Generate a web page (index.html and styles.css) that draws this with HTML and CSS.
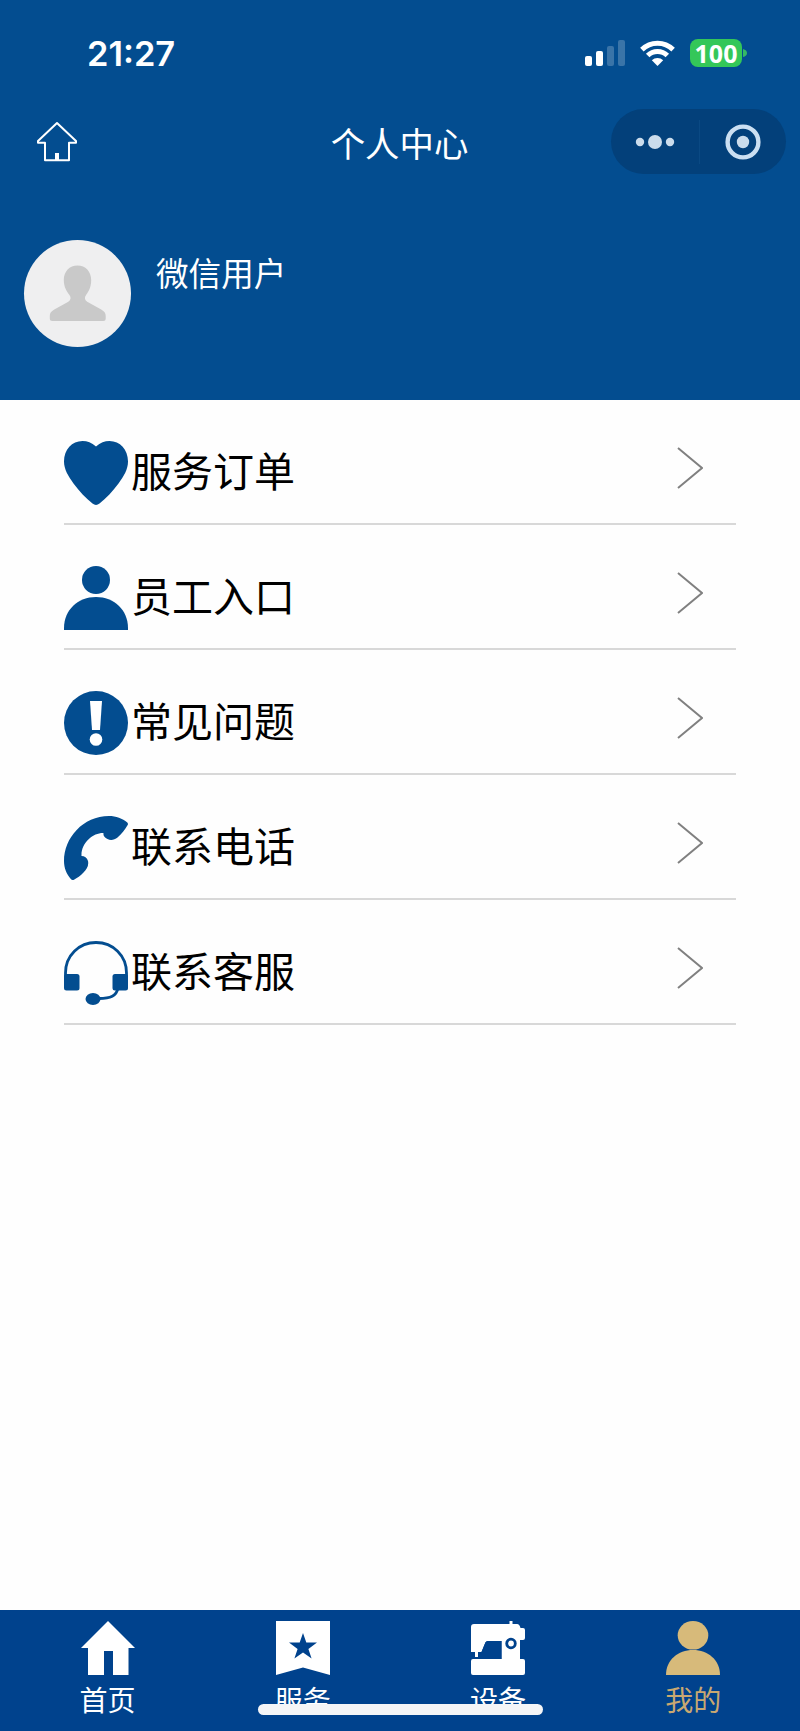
FILE: index.html
```html
<!DOCTYPE html>
<html lang="zh-CN">
<head>
  <meta charset="UTF-8">
  <title>个人中心</title>
  <meta name="viewport" content="width=device-width, initial-scale=1.0">
  <link rel="stylesheet" href="styles.css">
</head>
<body>
  <div class="page">
    <header class="header">
      <!-- 状态栏 -->
      <div class="status-bar">
        <span class="time">21:27</span>
        <div class="status-icons">
          <svg class="signal" width="40" height="26" viewBox="0 0 40 26" fill="#fff">
            <rect x="0" y="16" width="7" height="10" rx="2"/>
            <rect x="11" y="11" width="7" height="15" rx="2"/>
            <rect x="22" y="6" width="7" height="20" rx="2" opacity=".22"/>
            <rect x="33" y="0" width="7" height="26" rx="2" opacity=".22"/>
          </svg>
          <svg class="wifi" width="35" height="26" viewBox="0 0 35 26" fill="none" stroke="#fff" stroke-width="5">
            <path d="M1.900 9.600a22.200 22.200 0 0 1 31.200 0"/>
            <path d="M7.700 15.500a14 14 0 0 1 19.600 0"/>
            <path d="M11.800 20.200a8.400 8.400 0 0 1 11.400 0L17.500 26z" fill="#fff" stroke="none"/>
          </svg>
          <div class="battery"><span class="battery-level">100</span></div>
          <svg class="battery-cap" width="4" height="8" viewBox="0 0 4 8"><path d="M0 0q4 1 4 4t-4 4z" fill="#35b866"/></svg>
        </div>
      </div>

      <!-- 导航栏 -->
      <div class="nav-bar">
        <a class="nav-home">
          <svg width="42" height="42" viewBox="0 0 42 42" fill="none" stroke="#fff" stroke-width="2" stroke-linejoin="round">
            <path d="M21 2L2 20v1.800h7V39.300h24V21.800h7V20z"/>
            <path d="M21 32v7" stroke-width="4"/>
          </svg>
        </a>
        <h1 class="nav-title">个人中心</h1>
        <div class="capsule">
          <svg class="capsule-more" width="40" height="16" viewBox="0 0 40 16" fill="#cbdcec">
            <circle cx="5" cy="8" r="4.200"/>
            <circle cx="20" cy="8" r="7"/>
            <circle cx="35" cy="8" r="4.200"/>
          </svg>
          <span class="capsule-line"></span>
          <svg class="capsule-close" width="36" height="36" viewBox="0 0 36 36">
            <circle cx="18" cy="18" r="15.400" fill="none" stroke="#cbdff2" stroke-width="4.400"/>
            <circle cx="18" cy="18" r="6.200" fill="#cbdcec"/>
          </svg>
        </div>
      </div>

      <!-- 用户信息 -->
      <div class="user">
        <div class="avatar">
          <svg width="107" height="107" viewBox="0 0 107 107" fill="#c9c9c9">
            <path d="M53.500 25.500c8 0 13.700 6 13.700 14.500 0 7-2.500 11.500-5 14.800-2 2.600-1.700 5.200 1 6.900l14 7.800c3.200 1.900 4.500 3.600 4.500 6.500v2.500q0 2.500-2.500 2.500H28.300q-2.500 0-2.500-2.500V76c0-2.900 1.300-4.600 4.500-6.500l14-7.800c2.700-1.700 3-4.300 1-6.900-2.500-3.300-5.500-7.800-5.500-14.800 0-8.500 5.700-14.500 13.700-14.500z"/>
          </svg>
        </div>
        <span class="user-name">微信用户</span>
      </div>
    </header>

    <!-- 菜单列表 -->
    <main class="menu">
      <a class="menu-item">
        <svg class="menu-icon" viewBox="0 0 64 64" fill="#034d90">
          <path d="M32 5.500C27.500 1.800 23.500 0 18.500 0 8 0 0 8.500 0 20.500c0 8 4.500 15 9.500 22C15 50 22 57.500 28.500 62.600q3.500 2.800 7 0C42 57.500 49 50 54.500 42.500c5-7 9.500-14 9.500-22C64 8.500 56 0 45.500 0 40.500 0 36.500 1.800 32 5.500z"/>
        </svg>
        <span class="menu-text">服务订单</span>
        <svg class="arrow" viewBox="0 0 26 42"><path d="M1 1l24 20L1 41"/></svg>
      </a>
      <a class="menu-item">
        <svg class="menu-icon" viewBox="0 0 64 64" fill="#034d90">
          <circle cx="32" cy="14" r="14"/>
          <path d="M0 64v-2C0 44 14 31 32 31s32 13 32 31v2z"/>
        </svg>
        <span class="menu-text">员工入口</span>
        <svg class="arrow" viewBox="0 0 26 42"><path d="M1 1l24 20L1 41"/></svg>
      </a>
      <a class="menu-item">
        <svg class="menu-icon" viewBox="0 0 64 64" fill="#034d90">
          <circle cx="32" cy="32" r="32"/>
          <path d="M26 10h12l-2 29h-8z" fill="#fff"/>
          <circle cx="32" cy="48.500" r="6.300" fill="#fff"/>
        </svg>
        <span class="menu-text">常见问题</span>
        <svg class="arrow" viewBox="0 0 26 42"><path d="M1 1l24 20L1 41"/></svg>
      </a>
      <a class="menu-item">
        <svg class="menu-icon" viewBox="0 0 64 64" fill="#034d90">
          <path d="M63.300 6.500q1.200 1.200.2 2.700C61 13.500 57.500 18 53.500 21.500c-3 2.500-7 3.200-10 1.500-3-1.500-4.500-3.500-4-6C30 16.500 17 26 17.500 40c3 0 5.500 1.500 6.500 5 1 5-1.500 8-4.500 11.500-2.800 3.300-6.500 5.500-9.500 7.200q-2 .8-3.200-.7C2.500 58 0 52 0 45 0 22 19 0 45 0c7 0 13.500 2.500 18.300 6.500z"/>
        </svg>
        <span class="menu-text">联系电话</span>
        <svg class="arrow" viewBox="0 0 26 42"><path d="M1 1l24 20L1 41"/></svg>
      </a>
      <a class="menu-item">
        <svg class="menu-icon" viewBox="0 0 64 64" fill="#034d90">
          <path d="M1.500 36v-4C1.500 14.500 15 1.500 32 1.500S62.500 14.500 62.500 32v4M54 47c-1.500 8-7.500 10.500-19 10.500" fill="none" stroke="#034d90" stroke-width="2.800"/>
          <rect x="0" y="33" width="15.500" height="16.500" rx="2.500"/>
          <rect x="48.500" y="33" width="15.500" height="16.500" rx="2.500"/>
          <ellipse cx="29" cy="58" rx="7.500" ry="6"/>
        </svg>
        <span class="menu-text">联系客服</span>
        <svg class="arrow" viewBox="0 0 26 42"><path d="M1 1l24 20L1 41"/></svg>
      </a>
    </main>

    <!-- 底部标签栏 -->
    <nav class="tab-bar">
      <a class="tab">
        <svg class="tab-icon" viewBox="0 0 54 54" fill="#fff">
          <path d="M27 0l27 27h-6.500v27H32V30h-9v24H7V27H0z"/>
        </svg>
        <span>首页</span>
      </a>
      <a class="tab">
        <svg class="tab-icon" viewBox="0 0 54 54" fill="#fff" fill-rule="evenodd">
          <path d="M0 0h54v54l-27-7.500L0 54zM27 12l-3.300 9.600H13l8.600 6.400-3.200 9.500L27 31.600l8.600 5.900-3.200-9.500 8.600-6.400H30.300z"/>
        </svg>
        <span>服务</span>
      </a>
      <a class="tab">
        <svg class="tab-icon" viewBox="0 0 54 54" fill="#fff">
          <path d="M38.500 0h3v3H46q2.500 0 3.500 4H52q2 0 2 2v8q0 2-2 2h-3v19h3q2 0 2 2v12q0 2-2 2H2q-2 0-2-2V40q0-2 2-2h28.500V20H17q-2 0-2.600 1.500L10.500 31H7v5H4v-5H0V6q0-3 3-3h35.500z"/>
          <path d="M7 38v-2l3.500-5L14.400 21.500Q15 20 17 20h13.500v18z" fill="#00428d"/>
          <circle cx="40" cy="22.500" r="4.300" stroke="#00428d" stroke-width="2.800"/>
        </svg>
        <span>设备</span>
      </a>
      <a class="tab active">
        <svg class="tab-icon" viewBox="0 0 54 54" fill="#d7ba7a">
          <ellipse cx="27" cy="14.300" rx="15.300" ry="14.300"/>
          <path d="M0 54C0 39 12 29 27 29s27 10 27 25z"/>
        </svg>
        <span>我的</span>
      </a>
      <div class="home-indicator"></div>
    </nav>
  </div>
</body>
</html>
```
FILE: styles.css
```css
/* 基本样式 */
html, body {
  margin: 0;
  padding: 0;
  background-color: #fefefe;
  color: #000;
  font-family: "Noto Sans CJK SC", sans-serif;
}
*, *::before, *::after {
  box-sizing: border-box;
}
svg {
  display: block;
  flex-shrink: 0;
}
.page {
  display: flex;
  flex-direction: column;
  height: 1731px;
  overflow: hidden;
}
/* 顶部 */
.header {
  height: 400px;
  background-color: #034d90;
  color: #fff;
}
.status-bar {
  display: flex;
  justify-content: space-between;
  height: 108px;
  padding: 39px 53px 0 87px;
}
.time {
  font-family: Inter, sans-serif;
  font-size: 34.4px;
  font-weight: 600;
  line-height: 30px;
}
.status-icons {
  display: flex;
  align-items: center;
  height: 28px;
}
.wifi {
  margin-left: 15px;
}
.battery {
  width: 52px;
  height: 28px;
  margin-left: 15px;
  border-radius: 8px;
  background-color: #34c759;
  text-align: center;
}
.battery-level {
  display: block;
  font-family: "Open Sans", sans-serif;
  font-size: 25px;
  font-weight: 700;
  line-height: 28px;
}
.battery-cap {
  margin-left: 1px;
}
.nav-bar {
  display: grid;
  grid-template-columns: 1fr auto 1fr;
  align-items: center;
  height: 67px;
  padding: 0 14px 0 36px;
}
.nav-title {
  margin: 0 0 0 -23px;
  font-size: 34.4px;
  font-weight: 400;
  line-height: 48px;
}
.capsule {
  display: flex;
  align-items: center;
  justify-self: end;
  width: 175px;
  height: 65px;
  padding: 0 25px 0 24px;
  border-radius: 33px;
  background-color: #03407a;
}
.capsule-line {
  width: 1px;
  height: 44px;
  margin: 0 25px 0 24px;
  background-color: #0a4983;
}
.user {
  display: flex;
  padding: 65px 24px 0;
}
.avatar {
  width: 107px;
  height: 107px;
  border-radius: 50%;
  background-color: #efeff0;
}
.user-name {
  margin: 8px 0 0 25px;
  font-size: 32.6px;
  font-weight: 400;
  line-height: 48px;
}
/* 菜单列表 */
.menu {
  flex: 1;
  padding: 0 64px;
}
.menu-item {
  display: flex;
  align-items: center;
  height: 125px;
  padding-top: 22px;
  border-bottom: 2px solid #d8d8d8;
}
.menu-icon {
  width: 64px;
  height: 64px;
}
.menu-text {
  margin: 0 0 7px 3px;
  font-size: 41px;
  font-weight: 400;
  line-height: 60px;
}
.arrow {
  width: 26px;
  height: 42px;
  margin: 0 33px 10px auto;
  fill: none;
  stroke: #808080;
  stroke-width: 2;
}
/* 底部标签栏 */
.tab-bar {
  position: relative;
  display: flex;
  height: 121px;
  padding: 11px 9px 0 10px;
  background-color: #00428d;
}
.tab {
  flex: 1;
  display: flex;
  flex-direction: column;
  align-items: center;
  color: #fff;
  font-size: 28px;
  font-weight: 400;
  line-height: 40px;
}
.tab-icon {
  width: 54px;
  height: 54px;
  margin-bottom: 4px;
}
.tab.active {
  color: #c9a871;
}
.home-indicator {
  position: absolute;
  left: 258px;
  bottom: 16px;
  width: 285px;
  height: 11px;
  border-radius: 6px;
  background-color: #f4f5f7;
}
```
